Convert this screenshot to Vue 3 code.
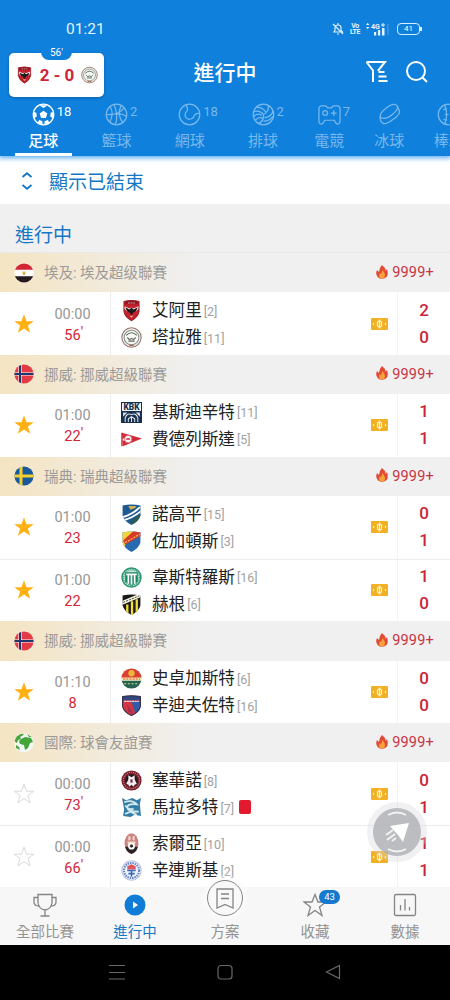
<template>
    <div class="phone">
        <!-- shared shapes -->
        <svg class="sprite" width="0" height="0" aria-hidden="true">
            <defs>
                <clipPath id="round"><circle cx="10" cy="10" r="9.6" /></clipPath>
                <clipPath id="shield"><path d="M1.500 1.500Q10 -.5 18.500 1.500V11Q17 16.500 10 20Q3 16.500 1.500 11Z" /></clipPath>

                <symbol id="egypt" viewBox="0 0 20 20">
                    <g clip-path="url(#round)">
                        <path fill="#fff" d="M0 0h20v20H0z" />
                        <path fill="#d22536" d="M0 0h20v6.700H0z" />
                        <path fill="#241a20" d="M0 13.300h20V20H0z" />
                        <path fill="#dbb45a" d="M8.500 8l1.500 1 1.500-1v3l-.7 1H9.200l-.7-1z" />
                    </g>
                </symbol>
                <symbol id="norway" viewBox="0 0 20 20">
                    <g clip-path="url(#round)">
                        <path fill="#e43a45" d="M0 0h20v20H0z" />
                        <path stroke="#fff" stroke-width="3.200" d="M6 0v20M0 10h20" />
                        <path stroke="#23376f" stroke-width="2" d="M6 0v20M0 10h20" />
                    </g>
                </symbol>
                <symbol id="sweden" viewBox="0 0 20 20">
                    <g clip-path="url(#round)">
                        <path fill="#17599a" d="M0 0h20v20H0z" />
                        <path stroke="#f5cf30" stroke-width="3" d="M7 0v20M0 10h20" />
                    </g>
                </symbol>
                <symbol id="world" viewBox="0 0 20 20">
                    <circle cx="10" cy="10" r="9.600" fill="#f3f8f3" />
                    <g fill="#43a53a" clip-path="url(#round)">
                        <path d="M0 8L2 3l5-3 3 1-2 2-2 1 1 2-3 1-1 3z" />
                        <path d="M7 6l4-2 6 1 2 4-3 1-2 5-3 2-1-5-4-1-1-3z" />
                        <path d="M13 1l5 3-3 0zM2 12l3 2 1 3-4-2z" />
                    </g>
                </symbol>

                <symbol id="ahly" viewBox="0 0 20 20">
                    <g transform="translate(1.500 0) scale(.85 1)">
                        <g clip-path="url(#shield)">
                            <path fill="#c4202d" d="M0 0h20v20H0z" />
                            <path fill="#8d1721" d="M3 1h14v3H3z" />
                            <path stroke="#dca5a8" stroke-dasharray="2 1" d="M6 2.800h8" />
                            <path fill="#fff" d="M2 6l6 2 2-1 2 1 6-2v2l-3 3-5 1-5-1-3-3z" />
                            <path fill="#231718" d="M3 7l5 2 2-2 2 2 5-2-2 4-3 1-2 3-2-3-3-1z" />
                            <path fill="#e8bf88" d="M8 15h4l-2 2z" />
                        </g>
                        <path fill="none" stroke="#9b1923" d="M1.500 1.500Q10 -.5 18.500 1.500V11Q17 16.500 10 19.500Q3 16.500 1.500 11Z" />
                    </g>
                </symbol>
                <symbol id="gaish" viewBox="0 0 20 20">
                    <circle cx="10" cy="10" r="9.200" fill="#f3eee9" stroke="#94736d" stroke-width="1" />
                    <circle cx="10" cy="10" r="7" fill="#f6faf5" stroke="#86958c" stroke-width="1" />
                    <path fill="none" stroke="#5f6460" stroke-width="1.100" d="M5 8Q10 3 15 8M6 10l2 2 2-1 2 1 2-2M7 13.500h6" />
                    <path stroke="#b74444" d="M8 17.500h4" />
                </symbol>
                <symbol id="kbk" viewBox="0 0 20 20">
                    <path fill="#17304f" d="M0 0h20v20H0z" />
                    <path fill="#fff" d="M1 1h18v7.500H1z" />
                    <text x="10" y="7.700" text-anchor="middle" font-size="8" font-weight="900" fill="#17304f">KBK</text>
                    <path fill="none" stroke="#dce3e8" d="M4 19v-4q2-5 6-3 4-2 6 3v4M7 19v-3l3-2 3 2v3M10 19v-5" />
                    <path fill="#dce3e8" d="M2 10h4l-4 4zM18 10h-4l4 4z" />
                </symbol>
                <symbol id="fredrikstad" viewBox="0 0 22 20">
                    <path fill="#d22b38" d="M1 3l21 6L2 17z" />
                    <path stroke="#fff" stroke-width="2" d="M0 10h9" />
                    <circle cx="7.500" cy="9.500" r="3.800" fill="#fff" stroke="#e57179" />
                    <path stroke="#d22b38" stroke-width="1.500" d="M5.500 9.500h4M1 3v14" />
                </symbol>
                <symbol id="goteborg" viewBox="0 0 20 20">
                    <g clip-path="url(#shield)">
                        <path fill="#1d5a91" d="M0 0h20v20H0z" />
                        <path fill="none" stroke="#fff" stroke-width="1.800" d="M-1 13Q10 11 18 3M1 16Q12 13 20 6" />
                        <path fill="#d4b14c" d="M7 2h7v1.500l-5 2z" />
                        <path fill="#2b5d54" d="M9 16l10-7v5l-7 6z" />
                    </g>
                </symbol>
                <symbol id="djurgarden" viewBox="0 0 20 20">
                    <g clip-path="url(#shield)">
                        <path fill="#286ab0" d="M0 0h20v20H0z" />
                        <path fill="#f3d437" d="M0 0h13L3 15H0z" />
                        <path fill="#d8392e" d="M12 0h8v4L4 13 2 9z" />
                        <path stroke="#f5d23b" stroke-dasharray="2 1" d="M4 11L18 3" />
                    </g>
                </symbol>
                <symbol id="vsk" viewBox="0 0 20 20">
                    <circle cx="10" cy="10" r="9" fill="#c3e4d8" stroke="#2c9573" stroke-width="1.500" />
                    <circle cx="10" cy="10" r="7.500" fill="none" stroke="#45a485" stroke-dasharray="1 1" stroke-width="1.500" />
                    <path fill="#198562" d="M4 5h12v9l-6 4-6-4z" />
                    <path stroke="#fff" stroke-width="1.600" d="M5 7h10M7 7v9M10 7v10M13 7v9" />
                </symbol>
                <symbol id="hacken" viewBox="0 0 20 20">
                    <g clip-path="url(#shield)">
                        <path fill="#191a15" d="M0 0h20v20H0z" />
                        <path stroke="#f3df38" stroke-width="2.200" d="M6 10v10M10.500 7v13M15 5v15" />
                        <path stroke="#f6f3df" stroke-width="3.500" d="M0 9L19 1" />
                        <path stroke="#292922" stroke-width=".8" stroke-dasharray="2 1" d="M2 8L17 2" />
                    </g>
                </symbol>
                <symbol id="stromsgodset" viewBox="0 0 20 20">
                    <g clip-path="url(#round)">
                        <path fill="#d84132" d="M0 0h20v10H0z" />
                        <path fill="#246451" d="M0 12h20v8H0z" />
                        <circle cx="10" cy="5" r="3" fill="#eeb73c" />
                        <path fill="#f5e6a9" d="M0 9h20v3H0z" />
                        <path stroke="#db4e34" stroke-dasharray="2 1" d="M2 10.500h16" />
                        <path stroke="#d9d67e" stroke-dasharray="2 1.500" d="M3 15h14" />
                    </g>
                </symbol>
                <symbol id="sandefjord" viewBox="0 0 20 20">
                    <g clip-path="url(#shield)">
                        <path fill="#d23642" d="M0 0h20v20H0z" />
                        <path fill="#315da8" d="M10 6h10v8l-6 5z" />
                        <path fill="#31477d" d="M0 1h20v4H0z" />
                        <path stroke="#e7dfe7" stroke-width="1.200" stroke-dasharray="2 .5" d="M3 6h14" />
                        <path fill="#a82c4b" d="M6 9l6 9-5-2z" />
                    </g>
                    <path fill="none" stroke="#302e4d" d="M1.500 1.500Q10 0 18.500 1.500V11Q17 16.500 10 19.500Q3 16.500 1.500 11Z" />
                </symbol>
                <symbol id="servette" viewBox="0 0 20 20">
                    <circle cx="10" cy="10" r="9.600" fill="#7d202c" />
                    <circle cx="10" cy="10" r="7.800" fill="none" stroke="#b9888c" stroke-dasharray="1 1" />
                    <circle cx="10" cy="10" r="6" fill="#241b20" />
                    <path fill="#f4edef" d="M7 5l3 2 3-2v4l2 4-2 1-1 2-2-2-2 2-1-2-2-1 2-4z" />
                    <path fill="#7d202c" d="M9 9h2v3H9z" />
                </symbol>
                <symbol id="marathon" viewBox="0 0 20 20">
                    <path fill="#337da6" d="M1 1l4 2 6-2 4 2 4-2-1 6 1 11-6-1-4 2-7-1 1-6z" />
                    <path fill="none" stroke="#d4e9f0" stroke-width="1.700" d="M3 5q8-3 12 2-9-1-9 3t11 4M4 8q3 5 8 3M4 16l5-2 6 3" />
                </symbol>
                <symbol id="zorya" viewBox="0 0 20 20">
                    <ellipse cx="10" cy="10" rx="6.600" ry="9.700" fill="#c98582" />
                    <path fill="#f4d7ca" d="M7 3h2v4H7zM11 3h2v4h-2zM6 8h8l-1 4H7z" />
                    <path fill="#272224" d="M4 13h12q-1 5-6 7-5-2-6-7z" />
                    <circle cx="10" cy="12.500" r="3.200" fill="#fff" />
                    <path fill="#37252a" d="M9 11h2l.7 2L10 14l-1.700-1z" />
                </symbol>
                <symbol id="zaglebie" viewBox="0 0 20 20">
                    <circle cx="10" cy="10" r="9.200" fill="#f0f4fb" stroke="#b5bede" />
                    <circle cx="10" cy="10" r="7.200" fill="none" stroke="#6b89c5" stroke-width="2" stroke-dasharray="1.500 .8" />
                    <path fill="#de5561" d="M10 4l4 2v3H6V6z" />
                    <path stroke="#3b67b4" stroke-width="1.500" d="M6 10h8M7 13h6M10 10v6" />
                </symbol>
                <symbol id="star" viewBox="0 0 22 22">
                    <path d="M11 1.200l2.500 7h7.300l-5.900 4.400 2.200 7.200L11 15.500l-6.100 4.300 2.200-7.200L1.200 8.200h7.300z" />
                </symbol>
            </defs>
        </svg>

        <header class="header">
            <div class="status">
                <span class="clock">01:21</span>
                <div class="signals">
                    <svg class="bell" viewBox="0 0 12 14">
                        <path d="M2 10h8.500L9 8V5.500Q9 3 6 3T3 5.500V8zM5 12h2M6 1v2M1 2l10 10" />
                    </svg>
                    <span class="volte"><b>Vo</b><b>LTE</b></span>
                    <svg class="bars" viewBox="0 0 24 14">
                        <path d="M0 3l1.700-2.200L3.400 3zM0 5l1.700 2.200L3.400 5zM8 10h2.200v3.500H8zM12 8h2.200v5.500H12zM16 6h2.500v7.500H16z" />
                        <path class="dim" d="M21.500 2h1v11h-1z" />
                        <path class="plus" d="M15 3h4M17 1v4" />
                        <text x="5" y="7">4G</text>
                    </svg>
                    <span class="battery">41</span>
                </div>
            </div>

            <div class="titlebar">
                <div class="mini">
                    <span class="mini-time">56'</span>
                    <svg class="mini-crest"><use href="#ahly" /></svg>
                    <b>2 - 0</b>
                    <svg class="mini-crest"><use href="#gaish" /></svg>
                </div>
                <h1>進行中</h1>
                <div class="actions">
                    <svg class="filter" viewBox="0 0 24 24">
                        <path d="M1.500 2h18.500l-6.500 8v1M1.500 2L8 10.500V22M13.500 12h6M13.500 16.500h8M13.500 21h9" />
                    </svg>
                    <svg class="search" viewBox="0 0 24 24">
                        <circle cx="11" cy="11" r="9" /><path d="M17.500 17.500L22 22" />
                    </svg>
                </div>
            </div>

            <nav class="sports">
                <div v-for="(s, i) in sports" :key="s.name" class="sport" :class="{ active: i === 0 }">
                    <div class="ball">
                        <svg viewBox="0 0 24 24">
                            <circle v-if="s.round" cx="12" cy="12" r="10.700" />
                            <path v-for="d in s.lines" :key="d" :d="d" />
                            <path v-if="s.fill" class="solid" :d="s.fill" />
                        </svg>
                        <span v-if="s.count" class="count">{{ s.count }}</span>
                    </div>
                    <span class="sport-name">{{ s.name }}</span>
                </div>
            </nav>
        </header>

        <main class="list">
            <div class="toggle">
                <svg viewBox="0 0 12 18"><path d="M1.500 5L6 1.200 10.500 5M1.500 13L6 16.800 10.500 13" /></svg>
                <span>顯示已結束</span>
            </div>
            <h2>進行中</h2>

            <section v-for="(league, li) in leagues" :key="li">
                <div class="league">
                    <svg class="flag"><use :href="'#' + league.flag" /></svg>
                    <span class="league-name">{{ league.name }}</span>
                    <svg class="fire" viewBox="0 0 12 14">
                        <path fill="#df4b36" d="M6 0q4 3 3.500 6L11 4q2 6-1 8.500-4 2.500-8 0-3-3-1-7.500L3 7Q3 3 6 0z" />
                        <path fill="#f6a33c" d="M6.500 5Q10 9 8.500 12.500 6 14.500 3.500 12.500 2.500 10 4 8l1 1.500z" />
                    </svg>
                    <span class="heat">9999+</span>
                </div>
                <div v-for="m in league.matches" :key="m.home.name" class="match">
                    <div class="fav" :class="{ on: m.fav }">
                        <svg><use href="#star" /></svg>
                    </div>
                    <div class="time">
                        <span>{{ m.start }}</span>
                        <span class="minute">{{ m.minute }}<i v-if="m.tick">'</i></span>
                    </div>
                    <div class="teams">
                        <div v-for="t in [m.home, m.away]" :key="t.name" class="team">
                            <svg class="crest"><use :href="'#' + t.crest" /></svg>
                            <span class="team-name">{{ t.name }}</span>
                            <span class="pos">[{{ t.pos }}]</span>
                            <span v-if="t.red" class="redcard"></span>
                        </div>
                    </div>
                    <svg class="ticket" viewBox="0 0 17 12">
                        <rect width="17" height="12" rx="1" />
                        <path d="M8.500 1.500v9M6.500 4l2-1.500 2 1.500v4l-2 1.500-2-1.500zM2.500 5v2M14.500 5v2" />
                    </svg>
                    <div class="score">
                        <span>{{ m.home.goals }}</span>
                        <span>{{ m.away.goals }}</span>
                    </div>
                </div>
            </section>
        </main>

        <div class="float">
            <svg viewBox="0 0 48 48">
                <path d="M36 15L30 34 25 27 17 18z" />
                <path class="streak" d="M13 27l7-5M14 32l8-6M19 33l4-3" />
                <path class="arc" d="M15 7Q24 2 33 7M15 41Q24 46 33 41" />
            </svg>
        </div>

        <footer class="tabs">
            <div v-for="tab in tabs" :key="tab.name" class="tab" :class="{ current: tab.current }">
                <div class="tab-icon" :class="{ plan: tab.plan }">
                    <svg viewBox="0 0 24 24">
                        <circle v-if="tab.current" cx="12" cy="12" r="10.500" />
                        <path :d="tab.path" />
                    </svg>
                    <span v-if="tab.badge" class="badge">{{ tab.badge }}</span>
                </div>
                <span>{{ tab.name }}</span>
            </div>
        </footer>

        <div class="android">
            <svg viewBox="0 0 16 16"><path d="M0 1.500h16M0 8.500h16M0 15h16" /></svg>
            <svg viewBox="0 0 16 16"><rect x="1" y="1.500" width="14" height="13.500" rx="3" /></svg>
            <svg viewBox="0 0 16 16"><path d="M14.500 1.500v13L1.500 8z" /></svg>
        </div>
    </div>
</template>

<script setup>
const sports = [
    {
        name: '足球', count: 18, round: true, lines: [],
        fill: 'M12 8l4 3-1.500 4.700h-5L8 11zM7.500 2.300h9L12 5.200zM1.300 9l3.200 1.300.5 3.700-2.800 2zM22.700 9l-3.200 1.300-.5 3.700 2.800 2zM6 20.500l1.500-3 3.500 1.700v3zM18 20.500l-1.500-3-3.500 1.700v3z'
    },
    { name: '籃球', count: 2, round: true, lines: ['M9.500 1.500Q14 12 11 22.500', 'M1.500 12Q14 13 20 5', 'M5 4Q10 9 5 20', 'M18.500 20.500Q12 12 17 2.500', 'M11 12Q17 10 22.500 14'] },
    { name: '網球', count: 18, round: true, lines: ['M8 2Q12 7 8 10Q6 15 11 17Q16 17 17 13Q19 10 22.500 11'] },
    { name: '排球', count: 2, round: true, lines: ['M12 12Q8 7 2 9', 'M12 12Q18 9 17 2.500', 'M12 12Q13 18 7 21.500', 'M5 4.500Q11 4 14.500 9.500', 'M22 8Q21 14 13 15.500', 'M22 14Q18 19 12 19', 'M2 14Q6 10 10 13', 'M3.500 18Q7 14 11.500 16'] },
    { name: '電競', count: 7, round: false, lines: ['M4 3H8L10 5H14L16 3H20Q23 3 23 6V19Q23 22 20 22Q18 21 17 18H7Q6 21 4 22Q1 22 1 19V6Q1 3 4 3Z', 'M5 10.500a2.500 2.500 0 1 0 5 0a2.500 2.500 0 1 0-5 0', 'M13.500 10.500h6M16.500 7.500v6'] },
    { name: '冰球', round: false, lines: ['M2.500 15Q1 11 9 5T20 3Q22 6 15 12T2.500 15Z', 'M2 14Q2 19 5 21Q8 23 16 17T22 8L20.500 3.500'] },
    { name: '棒球', round: true, lines: ['M8 2Q12 12 8 22', 'M6.500 7l4-1M8 12h4M6.500 17l4 1'] }
]

const team = (name, pos, crest, goals, red = false) => ({ name, pos, crest, goals, red })

const leagues = [
    {
        name: '埃及: 埃及超级聯賽', flag: 'egypt',
        matches: [
            { fav: true, start: '00:00', minute: 56, tick: true, home: team('艾阿里', 2, 'ahly', 2), away: team('塔拉雅', 11, 'gaish', 0) }
        ]
    },
    {
        name: '挪威: 挪威超級聯賽', flag: 'norway',
        matches: [
            { fav: true, start: '01:00', minute: 22, tick: true, home: team('基斯迪辛特', 11, 'kbk', 1), away: team('費德列斯達', 5, 'fredrikstad', 1) }
        ]
    },
    {
        name: '瑞典: 瑞典超級聯賽', flag: 'sweden',
        matches: [
            { fav: true, start: '01:00', minute: 23, home: team('諾高平', 15, 'goteborg', 0), away: team('佐加頓斯', 3, 'djurgarden', 1) },
            { fav: true, start: '01:00', minute: 22, home: team('韋斯特羅斯', 16, 'vsk', 1), away: team('赫根', 6, 'hacken', 0) }
        ]
    },
    {
        name: '挪威: 挪威超級聯賽', flag: 'norway',
        matches: [
            { fav: true, start: '01:10', minute: 8, home: team('史卓加斯特', 6, 'stromsgodset', 0), away: team('辛迪夫佐特', 16, 'sandefjord', 0) }
        ]
    },
    {
        name: '國際: 球會友誼賽', flag: 'world',
        matches: [
            { fav: false, start: '00:00', minute: 73, tick: true, home: team('塞華諾', 8, 'servette', 0), away: team('馬拉多特', 7, 'marathon', 1, true) },
            { fav: false, start: '00:00', minute: 66, tick: true, home: team('索爾亞', 10, 'zorya', 1), away: team('辛連斯基', 2, 'zaglebie', 1) }
        ]
    }
]

const tabs = [
    { name: '全部比賽', path: 'M5 1.500H19V10Q18 16 12 17Q6 16 5 10ZM5 4.500H1V9Q1 13 6 13M19 4.500H23V9Q23 13 18 13M12 17V23M7.500 23H16.500' },
    { name: '進行中', current: true, path: 'M10 8.500L15 12L10 15.500Z' },
    { name: '方案', plan: true, path: 'M4 3H20V22L12 18.500L4 22ZM8 8H16M8 12.500H16' },
    { name: '收藏', badge: 43, path: 'M12 1.500L15 9H23L16.500 14L19 22.500L12 17.500L5 22.500L7.500 14L1 9H9Z' },
    { name: '數據', path: 'M3 1.500H21Q22.500 1.500 22.500 3V21Q22.500 22.500 21 22.500H3Q1.500 22.500 1.500 21V3Q1.500 1.500 3 1.500ZM7.500 12V17.500M12 6V17.500M16.500 14V17.500' }
]
</script>

<style>
body {
    background: #fff;
}
</style>

<style scoped>
.phone {
    position: relative;
    display: flex;
    flex-direction: column;
    width: 450px;
    height: 1000px;
    overflow: hidden;
    font-family: Roboto, "Noto Sans CJK TC", sans-serif;
    background: #fff;
}

.phone * {
    box-sizing: border-box;
}

svg {
    display: block;
    flex-shrink: 0;
}

.sprite {
    position: absolute;
}

.header {
    position: relative;
    z-index: 1;
    flex: none;
    height: 156px;
    background: #0f80dc;
    color: #fff;
    box-shadow: 0 1px 5px 1px #5aaaf0;
}

.status {
    display: flex;
    align-items: center;
    justify-content: space-between;
    height: 50px;
    padding: 8px 30px 0 66px;
}

.clock {
    font-size: 15.500px;
    color: #e3f3ff;
}

.signals {
    display: flex;
    align-items: center;
}

.bell {
    width: 12px;
    height: 14px;
    margin-right: 6px;
    fill: none;
    stroke: #d8efff;
    stroke-width: 1.200;
}

.volte {
    display: flex;
    flex-direction: column;
    align-items: center;
    width: 10px;
    margin-right: 6px;
    font-size: 7px;
    line-height: 6.500px;
    letter-spacing: -.4px;
    color: #e3f3ff;
}

.bars {
    width: 24px;
    height: 14px;
    margin-right: 7px;
    fill: #e3f3ff;
}

.bars text {
    font-size: 7px;
    font-weight: 700;
}

.bars .plus {
    stroke: #e3f3ff;
}

.bars .dim {
    fill: #4ea2e6;
}

.battery {
    position: relative;
    width: 23px;
    height: 12px;
    border: 1px solid #d8efff;
    border-radius: 4px;
    font-size: 8px;
    line-height: 10px;
    text-align: center;
}

.battery::after {
    content: '';
    position: absolute;
    top: 3px;
    right: -3px;
    width: 2px;
    height: 4px;
    background: #d8efff;
}

.titlebar {
    display: grid;
    grid-template-columns: 96px 1fr 96px;
    align-items: center;
    height: 50px;
    padding: 0 20px 0 9px;
}

.mini {
    position: relative;
    display: flex;
    align-items: center;
    justify-content: space-between;
    width: 95px;
    height: 44px;
    padding: 0 6px 0 7px;
    border-radius: 5px;
    background: #fff;
    box-shadow: 0 1px 3px #0b60a8;
}

.mini b {
    font-size: 17px;
    font-weight: 700;
    color: #d0243a;
}

.mini-time {
    position: absolute;
    top: -8px;
    left: 32px;
    width: 31px;
    height: 15px;
    border-radius: 0 0 8px 8px;
    background: #0f80dc;
    font-size: 10px;
    line-height: 16px;
    text-align: center;
}

.mini-crest {
    width: 17px;
    height: 18px;
}

h1 {
    margin: 0 0 5px 11px;
    font-size: 21px;
    line-height: 30px;
    font-weight: 500;
    text-align: center;
}

.actions {
    display: flex;
    justify-content: flex-end;
    gap: 16px;
    padding: 0 1px 6px 0;
    fill: none;
    stroke: #fff;
    stroke-width: 2;
}

.filter,
.search {
    width: 24px;
    height: 24px;
}

.sports {
    display: grid;
    grid-template-columns: 73.300px 73.300px 73.300px 73.300px 59px 61px 58px;
    height: 56px;
    padding-left: 6.500px;
    overflow: hidden;
}

.sport {
    position: relative;
    display: flex;
    flex-direction: column;
    align-items: center;
    padding-top: 3px;
    color: #79b8ec;
}

.sport.active {
    color: #fff;
}

.sport.active::after {
    content: '';
    position: absolute;
    bottom: 0;
    left: 8px;
    width: 57px;
    height: 3px;
    background: #fff;
}

.ball {
    position: relative;
}

.ball svg {
    width: 23px;
    height: 23px;
    fill: none;
    stroke: currentColor;
    stroke-width: 1.300;
}

.ball .solid {
    fill: currentColor;
    stroke: none;
}

.count {
    position: absolute;
    top: 2px;
    left: 25px;
    font-size: 13px;
    line-height: 13px;
}

.sport-name {
    margin-top: 4px;
    font-size: 15px;
    line-height: 22px;
    white-space: nowrap;
}

.active .sport-name {
    font-weight: 500;
}

.list {
    flex: none;
    height: 731px;
    overflow: hidden;
}

.toggle {
    display: flex;
    align-items: center;
    gap: 16px;
    height: 48px;
    padding: 1px 0 0 21px;
    font-size: 19px;
    color: #1476c6;
}

.toggle svg {
    width: 12px;
    height: 18px;
    fill: none;
    stroke: #1476c6;
    stroke-width: 1.800;
}

h2 {
    height: 49px;
    margin: 0;
    padding: 15px 0 0 15px;
    border-bottom: 1px solid #e9e9e9;
    background: #f0f0f1;
    font-size: 19px;
    line-height: 33px;
    font-weight: 400;
    color: #1476c6;
}

.league {
    display: flex;
    align-items: center;
    height: 39.200px;
    padding: 0 16px 0 14px;
    background: linear-gradient(90deg, #f4e4c2 0, #f0f0f1 200px);
}

.flag {
    width: 20px;
    height: 20px;
}

.league-name {
    flex: 1;
    margin-left: 10px;
    padding-bottom: 2px;
    font-size: 14.500px;
    color: #9c9a98;
}

.fire {
    width: 12px;
    height: 14px;
    margin: 0 4px 2px 0;
}

.heat {
    font-size: 14.500px;
    letter-spacing: .2px;
    color: #c93443;
}

.match {
    display: grid;
    grid-template-columns: 48px 62px 1fr 26px 53px;
    align-items: center;
    height: 62.700px;
}

.match + .match {
    border-top: 1px solid #ececec;
}

.fav {
    padding-left: 13px;
    fill: none;
    stroke: #dadada;
}

.fav svg {
    width: 22px;
    height: 22px;
}

.fav.on {
    fill: #ffb013;
    stroke: none;
}

.time {
    display: flex;
    flex-direction: column;
    align-items: center;
    padding: 2px 13px 0 0;
    font-size: 14.500px;
    line-height: 21px;
    color: #979797;
}

.minute {
    position: relative;
    color: #d3243a;
}

.minute i {
    position: absolute;
    left: 100%;
    top: -3px;
    font-style: normal;
}

.teams {
    display: flex;
    flex-direction: column;
    justify-content: center;
    height: 100%;
    padding: 2px 0 0 10px;
    border-left: 1px solid #ececec;
}

.team {
    display: flex;
    align-items: center;
    height: 27px;
}

.crest {
    width: 21px;
    height: 21px;
    margin-bottom: 1px;
}

.team-name {
    margin-left: 10px;
    font-size: 16.600px;
    line-height: 26px;
    color: #222;
    white-space: nowrap;
}

.pos {
    margin-left: 2px;
    font-size: 12.500px;
    color: #a2a2a2;
}

.redcard {
    width: 12px;
    height: 14px;
    margin: 0 0 2px 5px;
    border-radius: 2px;
    background: #e2192f;
}

.ticket {
    width: 17px;
    height: 12px;
    fill: #f2b125;
}

.ticket path {
    fill: none;
    stroke: #fff2c5;
    stroke-width: 1.200;
}

.score {
    display: flex;
    flex-direction: column;
    justify-content: center;
    height: 100%;
    border-left: 1px solid #f3f3f3;
    font-size: 17px;
    line-height: 27px;
    font-weight: 500;
    text-align: center;
    color: #c92439;
}

.float {
    position: absolute;
    top: 802px;
    left: 367px;
    display: flex;
    align-items: center;
    justify-content: center;
    width: 60px;
    height: 60px;
    border-radius: 50%;
    background: rgba(215, 216, 220, .35);
}

.float svg {
    width: 48px;
    height: 48px;
    border-radius: 50%;
    background: rgba(168, 169, 173, .72);
    fill: #fff;
}

.float .streak,
.float .arc {
    fill: none;
    stroke: #f3f3f4;
    stroke-width: 2;
}

.tabs {
    position: relative;
    display: grid;
    grid-template-columns: repeat(5, 1fr);
    grid-template-rows: 58px;
    flex: none;
    height: 58px;
    background: #f7f7f7;
}

.tab {
    display: flex;
    flex-direction: column;
    align-items: center;
    justify-content: flex-end;
    padding-bottom: 1px;
    font-size: 14.500px;
    line-height: 22px;
    color: #939393;
}

.tab.current {
    color: #1476c6;
}

.tab-icon {
    position: relative;
    flex: none;
    margin-bottom: 5px;
}

.tab-icon svg {
    width: 24px;
    height: 24px;
    fill: none;
    stroke: #858585;
    stroke-width: 1.300;
}

.current .tab-icon circle {
    fill: #107cd5;
    stroke: none;
}

.current .tab-icon path {
    fill: #fff;
    stroke: none;
}

.plan {
    display: flex;
    align-items: center;
    justify-content: center;
    width: 36px;
    height: 36px;
    margin-bottom: 6px;
    border: 1.500px solid #858585;
    border-radius: 50%;
    background: #f9f9f9;
    box-shadow: 0 0 4px 3px #fbfbfb;
}

.badge {
    position: absolute;
    top: -3px;
    left: 16px;
    width: 21px;
    height: 14px;
    border-radius: 7px;
    background: #1479cf;
    font-size: 9.500px;
    line-height: 14px;
    text-align: center;
    color: #fff;
}

.android {
    display: flex;
    flex: none;
    justify-content: center;
    gap: 92px;
    height: 55px;
    padding-top: 19px;
    background: #000;
    fill: none;
    stroke: #686868;
    stroke-width: 1.200;
}

.android svg {
    width: 16px;
    height: 16px;
}
</style>
